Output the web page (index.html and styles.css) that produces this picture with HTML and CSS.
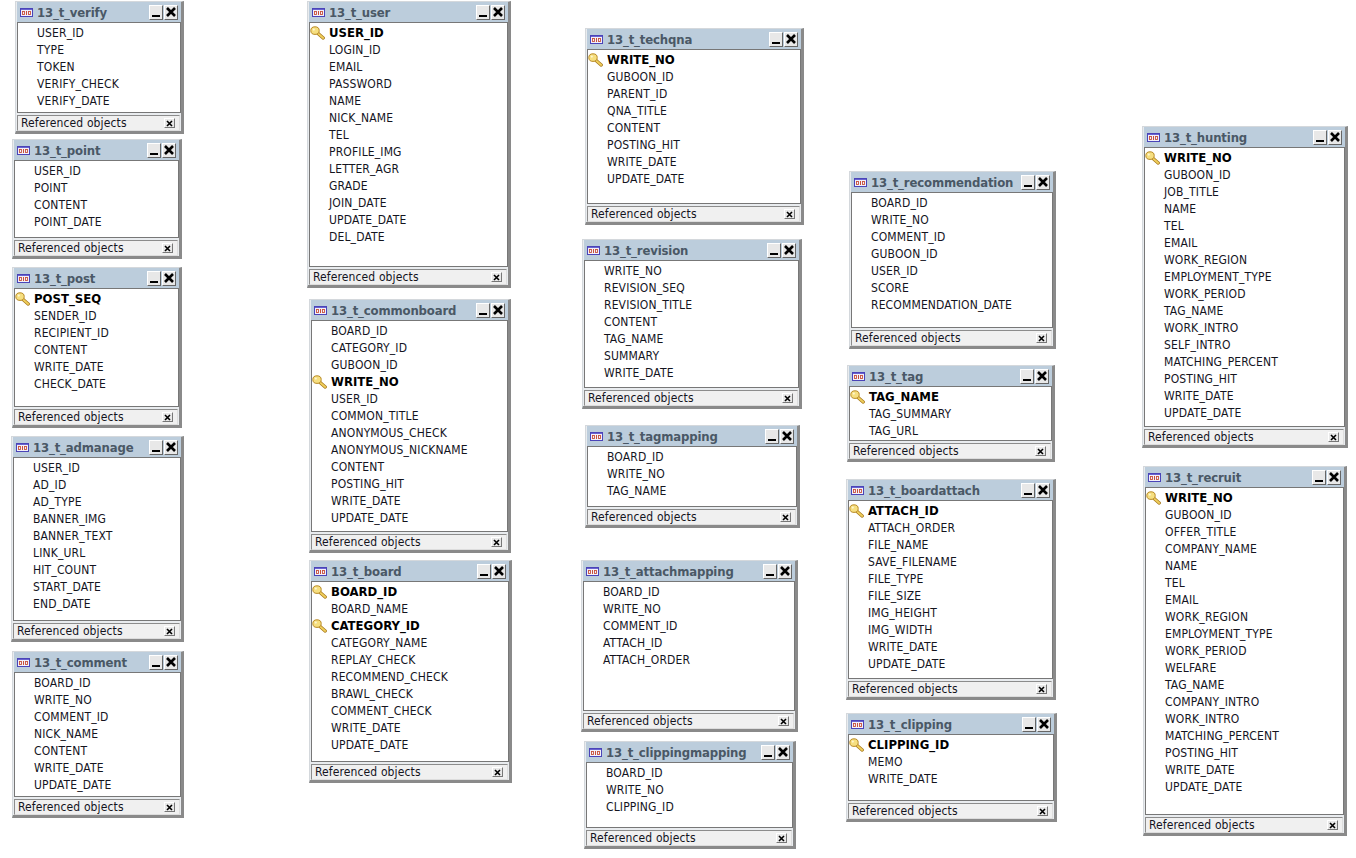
FILE: index.html
```html
<!DOCTYPE html>
<html lang="en">
<head>
<meta charset="utf-8">
<title>ERD</title>
<link rel="stylesheet" href="styles.css">
</head>
<body>
<main class="canvas" id="canvas"></main>
<script src="app.js"></script>
</body>
</html>
```
FILE: styles.css
```css
html, body { margin: 0; padding: 0; background: #fff; }
.canvas { position: relative; width: 1356px; height: 858px; overflow: hidden; font-family: "DejaVu Sans Condensed", "DejaVu Sans", sans-serif; font-stretch: condensed; }
.win { position: absolute; box-sizing: border-box; display: flex; flex-direction: column; background: #e9ecef; border: 1px solid #d4d8dc; border-right: 3px solid #8a8a8a; border-bottom: 3px solid #8a8a8a; padding: 0 0 0 1px; }
.bar { height: 20px; flex: none; display: flex; align-items: center; background: #bccddc; padding: 0 3px 0 3px; }
.tbl { width: 13px; height: 9px; flex: none; margin-right: 4px; }
.name { flex: 1; font-size: 13px; font-weight: 700; letter-spacing: -.15px; color: #4a5866; white-space: nowrap; overflow: hidden; }
.btn { width: 14px; height: 15px; flex: none; margin-left: 1px; box-sizing: border-box; background: #e8e8e8; border: 1px solid #666; border-top-color: #fff; border-left-color: #fff; display: flex; align-items: center; justify-content: center; }
.btn svg { width: 10px; height: 10px; }
.body { flex: 1; background: #fff; border: 1px solid #777; padding: 2px 0 0; min-height: 0; overflow: hidden; }
.row { height: 17px; line-height: 17px; font-size: 12px; letter-spacing: .15px; color: #14141e; padding-left: 19px; position: relative; white-space: nowrap; }
.row.pk { font-weight: 700; font-size: 13px; letter-spacing: 0; line-height: 15px; color: #000; }
.key { position: absolute; left: 0; top: 1px; width: 15px; height: 14px; }
.foot { height: 16px; flex: none; box-sizing: border-box; margin: 2px 1px 0 0; background: #f0f0f0; border: 1px solid #8c8c8c; border-right-color: #ddd; border-bottom-color: #ddd; display: flex; align-items: center; justify-content: space-between; padding: 0 4px 0 3px; font-size: 12px; letter-spacing: .12px; color: #14141e; }
.mini { width: 11px; height: 10px; box-sizing: border-box; background: #e8e8e8; border: 1px solid #777; border-top-color: #fff; border-left-color: #fff; display: flex; align-items: center; justify-content: center; }
.mini svg { width: 7px; height: 7px; }
```
FILE: app.js
```js
var data = [
["13_t_verify",15,1,169,133,["USER_ID","TYPE","TOKEN","VERIFY_CHECK","VERIFY_DATE"]],
["13_t_point",12,139,170,120,["USER_ID","POINT","CONTENT","POINT_DATE"]],
["13_t_post",12,267,170,161,["*POST_SEQ","SENDER_ID","RECIPIENT_ID","CONTENT","WRITE_DATE","CHECK_DATE"]],
["13_t_admanage",11,436,173,206,["USER_ID","AD_ID","AD_TYPE","BANNER_IMG","BANNER_TEXT","LINK_URL","HIT_COUNT","START_DATE","END_DATE"]],
["13_t_comment",12,651,172,167,["BOARD_ID","WRITE_NO","COMMENT_ID","NICK_NAME","CONTENT","WRITE_DATE","UPDATE_DATE"]],
["13_t_user",307,1,204,287,["*USER_ID","LOGIN_ID","EMAIL","PASSWORD","NAME","NICK_NAME","TEL","PROFILE_IMG","LETTER_AGR","GRADE","JOIN_DATE","UPDATE_DATE","DEL_DATE"]],
["13_t_commonboard",309,299,202,254,["BOARD_ID","CATEGORY_ID","GUBOON_ID","*WRITE_NO","USER_ID","COMMON_TITLE","ANONYMOUS_CHECK","ANONYMOUS_NICKNAME","CONTENT","POSTING_HIT","WRITE_DATE","UPDATE_DATE"]],
["13_t_board",309,560,203,223,["*BOARD_ID","BOARD_NAME","*CATEGORY_ID","CATEGORY_NAME","REPLAY_CHECK","RECOMMEND_CHECK","BRAWL_CHECK","COMMENT_CHECK","WRITE_DATE","UPDATE_DATE"]],
["13_t_techqna",585,28,219,197,["*WRITE_NO","GUBOON_ID","PARENT_ID","QNA_TITLE","CONTENT","POSTING_HIT","WRITE_DATE","UPDATE_DATE"]],
["13_t_revision",582,239,220,170,["WRITE_NO","REVISION_SEQ","REVISION_TITLE","CONTENT","TAG_NAME","SUMMARY","WRITE_DATE"]],
["13_t_tagmapping",585,425,215,103,["BOARD_ID","WRITE_NO","TAG_NAME"]],
["13_t_attachmapping",581,560,217,172,["BOARD_ID","WRITE_NO","COMMENT_ID","ATTACH_ID","ATTACH_ORDER"]],
["13_t_clippingmapping",584,741,212,108,["BOARD_ID","WRITE_NO","CLIPPING_ID"]],
["13_t_recommendation",849,171,207,178,["BOARD_ID","WRITE_NO","COMMENT_ID","GUBOON_ID","USER_ID","SCORE","RECOMMENDATION_DATE"]],
["13_t_tag",847,365,208,97,["*TAG_NAME","TAG_SUMMARY","TAG_URL"]],
["13_t_boardattach",846,479,210,221,["*ATTACH_ID","ATTACH_ORDER","FILE_NAME","SAVE_FILENAME","FILE_TYPE","FILE_SIZE","IMG_HEIGHT","IMG_WIDTH","WRITE_DATE","UPDATE_DATE"]],
["13_t_clipping",846,713,211,109,["*CLIPPING_ID","MEMO","WRITE_DATE"]],
["13_t_hunting",1142,126,206,322,["*WRITE_NO","GUBOON_ID","JOB_TITLE","NAME","TEL","EMAIL","WORK_REGION","EMPLOYMENT_TYPE","WORK_PERIOD","TAG_NAME","WORK_INTRO","SELF_INTRO","MATCHING_PERCENT","POSTING_HIT","WRITE_DATE","UPDATE_DATE"]],
["13_t_recruit",1143,466,204,370,["*WRITE_NO","GUBOON_ID","OFFER_TITLE","COMPANY_NAME","NAME","TEL","EMAIL","WORK_REGION","EMPLOYMENT_TYPE","WORK_PERIOD","WELFARE","TAG_NAME","COMPANY_INTRO","WORK_INTRO","MATCHING_PERCENT","POSTING_HIT","WRITE_DATE","UPDATE_DATE"]]
];
var tbl = '<svg class="tbl" viewBox="0 0 13 9"><rect x=".5" y=".5" width="12" height="8" fill="#f3f0fa" stroke="#4a44b8"/><path d="M1 1.5H12" stroke="#6a62d0"/><rect x="2.5" y="3.5" width="2" height="3" fill="none" stroke="#c8503a" stroke-width=".9"/><path d="M6.5 3V7" stroke="#c8503a"/><rect x="8.5" y="3.5" width="2" height="3" fill="none" stroke="#c8503a" stroke-width=".9"/></svg>';
var key = '<svg class="key" viewBox="0 0 15 14"><path d="M7.5 7L13.2 12" stroke="#a87a1e" stroke-width="3.4" stroke-linecap="round"/><path d="M7.5 7L13.2 12" stroke="#f0cf5c" stroke-width="1.8" stroke-linecap="round"/><ellipse cx="5" cy="4.6" rx="4.2" ry="3.8" fill="#f6df80" stroke="#b98a24"/><circle cx="3.8" cy="3.6" r="1.1" fill="#fdf6d2"/></svg>';
var minI = '<svg viewBox="0 0 10 10"><rect x="1" y="8" width="8" height="2" fill="#000"/></svg>';
var xI = '<svg viewBox="0 0 10 10"><path d="M1 1L9 9M9 1L1 9" stroke="#000" stroke-width="2.6"/></svg>';
var xS = '<svg viewBox="0 0 7 7"><path d="M1 1L6 6M6 1L1 6" stroke="#000" stroke-width="1.6"/></svg>';
var html = data.map(function (d) {
  var rows = d[5].map(function (r) {
    var pk = r.charAt(0) === "*";
    return '<div class="row' + (pk ? ' pk' : '') + '">' + (pk ? key : '') + (pk ? r.slice(1) : r) + '</div>';
  }).join("");
  return '<section class="win" style="left:' + d[1] + 'px;top:' + d[2] + 'px;width:' + d[3] + 'px;height:' + d[4] + 'px">' +
    '<div class="bar">' + tbl + '<span class="name">' + d[0] + '</span><span class="btn">' + minI + '</span><span class="btn">' + xI + '</span></div>' +
    '<div class="body">' + rows + '</div>' +
    '<div class="foot"><span>Referenced objects</span><span class="mini">' + xS + '</span></div></section>';
}).join("");
document.getElementById("canvas").innerHTML = html;
```
